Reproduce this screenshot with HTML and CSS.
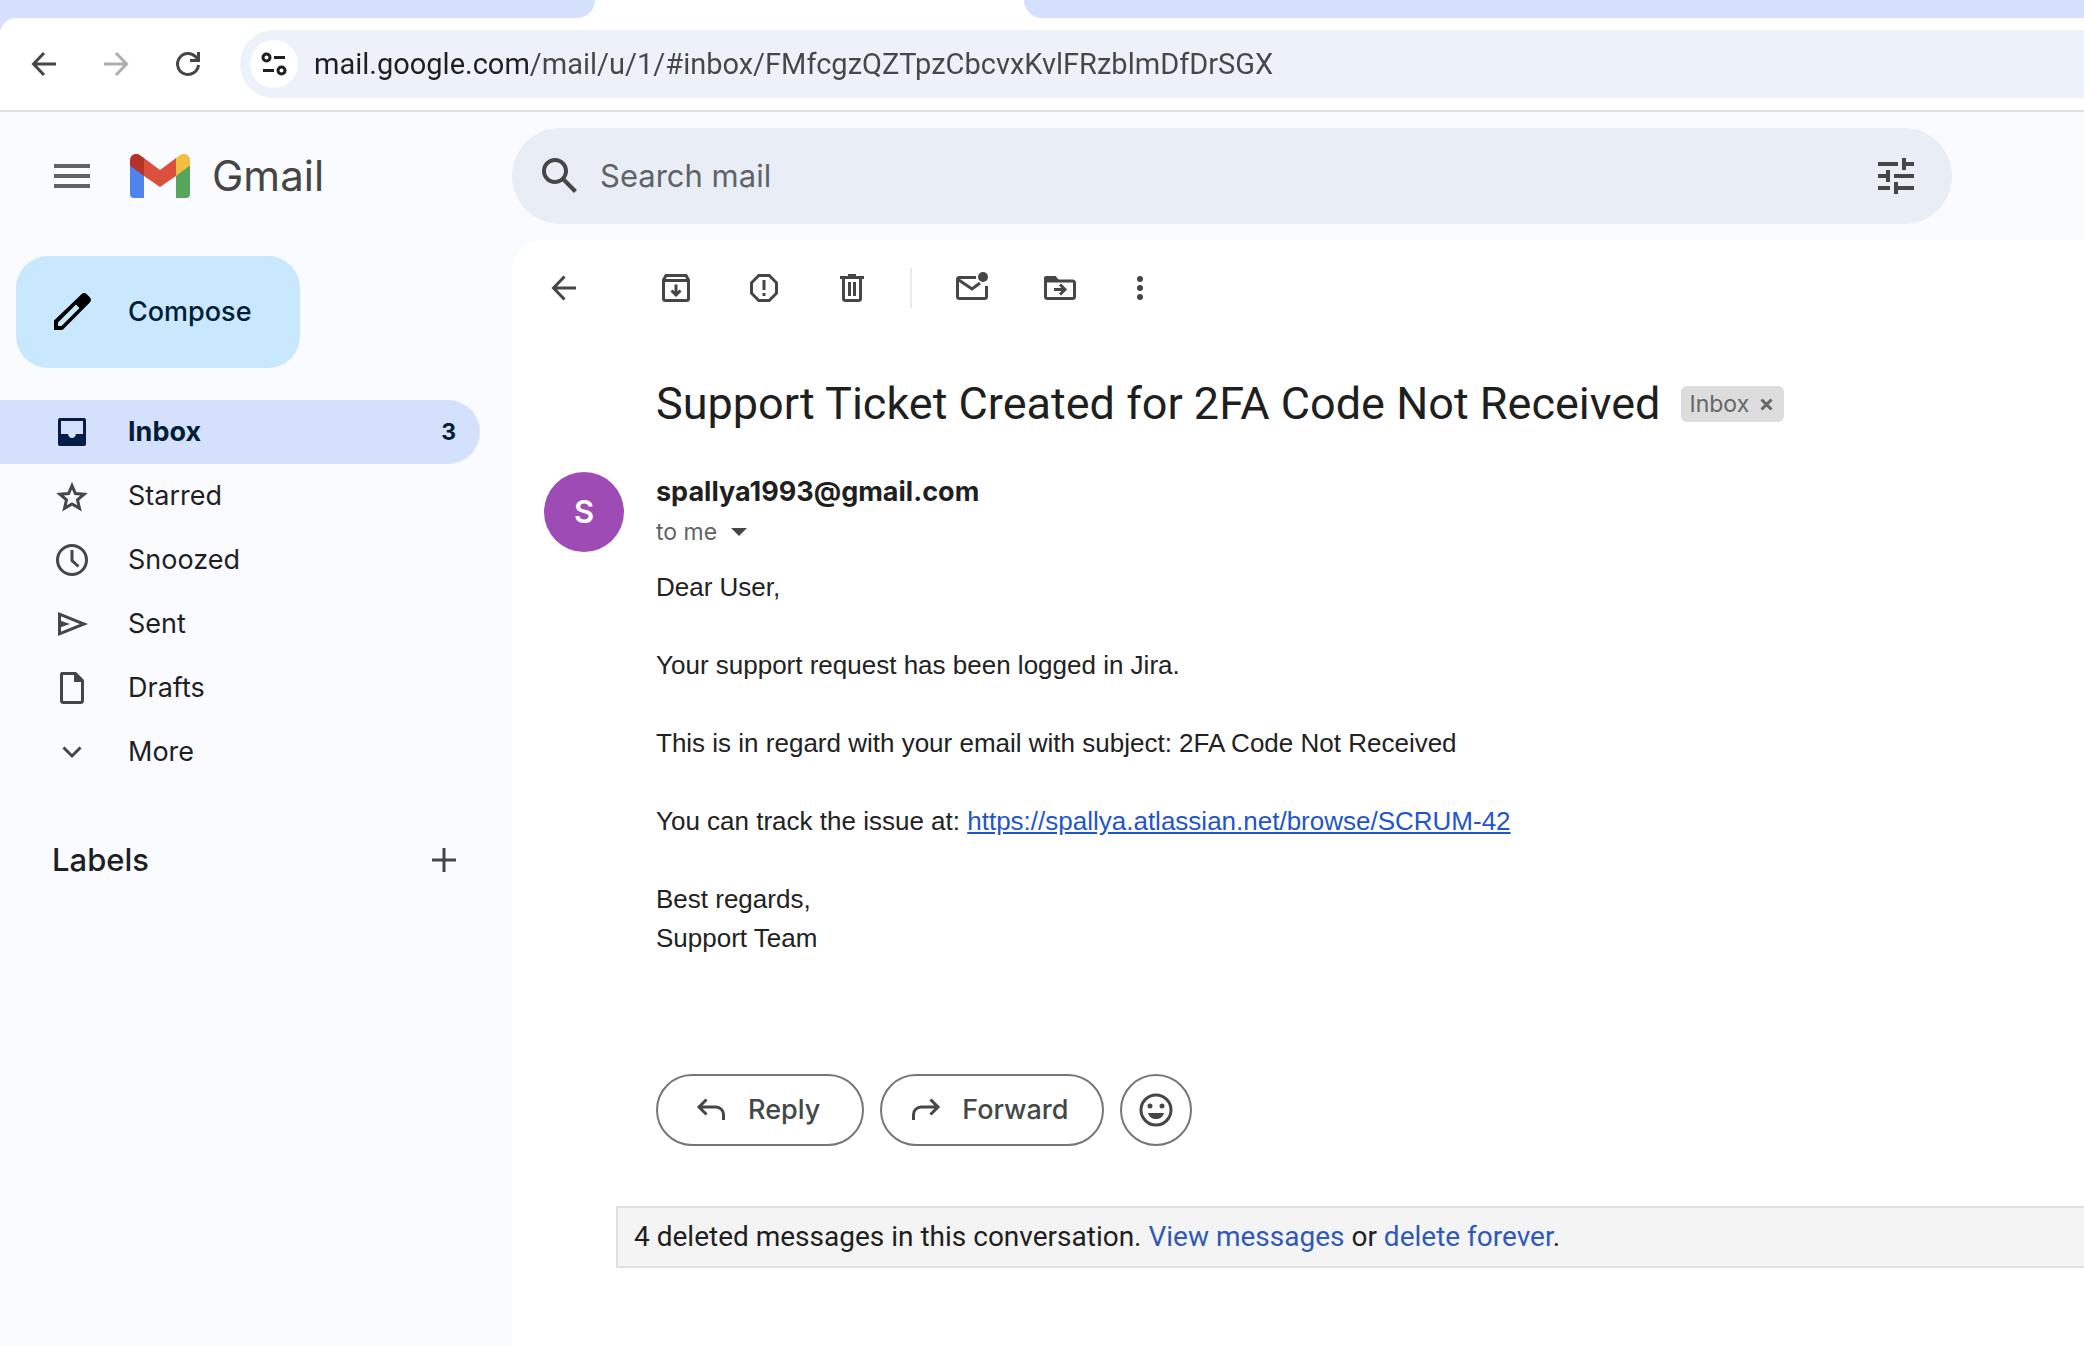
FILE: index.html
```html
<!DOCTYPE html>
<html lang="en">
<head>
<meta charset="utf-8">
<meta name="viewport" content="width=device-width, initial-scale=1">
<title>Support Ticket Created for 2FA Code Not Received - Gmail</title>
<link rel="stylesheet" href="styles.css">
</head>
<body>
<div class="browser">
  <div class="tabs">
    <div class="tab tab-before"></div>
    <div class="tab-active"></div>
    <div class="tab tab-after"></div>
  </div>
  <div class="toolbar">
    <button class="nav-btn" aria-label="Back">
      <svg viewBox="0 0 40 40" class="icon line"><path d="M32 20H10M20 9 9.500 20 20 31"/></svg>
    </button>
    <button class="nav-btn nav-off" aria-label="Forward" disabled>
      <svg viewBox="0 0 40 40" class="icon line"><path d="M8 20h22M20 9l10.500 11L20 31"/></svg>
    </button>
    <button class="nav-btn" aria-label="Reload">
      <svg viewBox="0 0 40 40" class="icon line"><path d="M30.500 21A10.500 10.500 0 1 1 27.500 12.600l3 3M30.500 8v8.500H22"/></svg>
    </button>
    <div class="omnibox">
      <button class="site-btn" aria-label="View site information">
        <svg viewBox="0 0 48 48" class="site-icon line"><circle cx="16.500" cy="17.500" r="3.500"/><path d="M24 17.500h11M13 30.500h11"/><circle cx="31.500" cy="30.500" r="3.500"/></svg>
      </button>
      <input class="url" type="text" aria-label="Address" spellcheck="false" value="mail.google.com/mail/u/1/#inbox/FMfcgzQZTpzCbcvxKvlFRzblmDfDrSGX">
    </div>
  </div>
</div>

<div class="app">
  <header class="header">
    <div class="brand">
      <button class="plain" aria-label="Main menu">
        <svg viewBox="0 0 48 48" class="icon-lg menu-icon"><path d="M6 12h36v4H6zM6 22h36v4H6zM6 32h36v4H6z"/></svg>
      </button>
      <a class="logo" href="#">
        <svg viewBox="0 0 60 44" class="logo-mark" aria-hidden="true">
          <path fill="#4f83ee" d="M4 44h10V20.500L0 10v30a4 4 0 0 0 4 4z"/>
          <path fill="#57a55a" d="M46 44h10a4 4 0 0 0 4-4V10L46 20.500z"/>
          <path fill="#f1be42" d="M46 4v18l14-10.500V6C60 .8 54-2 49.800 1.200z"/>
          <path fill="#d9503f" d="M14 22V4l16 12L46 4v18L30 33z"/>
          <path fill="#b43329" d="M0 6v5.500L14 22V4l-3.800-2.800C6-2 0 .8 0 6z"/>
        </svg>
        <span class="logo-text">Gmail</span>
      </a>
    </div>
    <form class="search">
      <button class="plain" type="button" aria-label="Search">
        <svg viewBox="0 0 24 24" class="icon-lg"><path d="M20.490 19l-5.730-5.730C15.530 12.200 16 10.910 16 9.500A6.500 6.500 0 1 0 9.500 16c1.410 0 2.700-.470 3.770-1.240L19 20.490 20.490 19zM5 9.500C5 7.010 7.010 5 9.500 5S14 7.010 14 9.500 11.990 14 9.500 14 5 11.990 5 9.500z"/></svg>
      </button>
      <input class="search-input" type="text" placeholder="Search mail" aria-label="Search mail">
      <button class="plain" type="button" aria-label="Show search options">
        <svg viewBox="0 0 24 24" class="icon-lg"><path d="M3 17v2h6v-2H3zM3 5v2h10V5H3zm10 16v-2h8v-2h-8v-2h-2v6h2zM7 9v2H3v2h4v2h2V9H7zm14 4v-2H11v2h10zm-6-4h2V7h4V5h-4V3h-2v6z"/></svg>
      </button>
    </form>
  </header>

  <aside class="sidebar">
    <button class="compose">
      <svg viewBox="0 0 48 48" class="icon-lg" aria-hidden="true"><path fill-rule="evenodd" d="M6 42v-9.500L33.500 6.200c1.600-1.600 3.700-1.500 5.300 0l3 3c1.600 1.600 1.600 3.700 0 5.300L14.500 42zM10 38h3.500l18-18-3.500-3.500-18 18z"/></svg>
      Compose
    </button>
    <nav class="folders" aria-label="Folders">
      <a class="folder folder-on" href="#inbox"><svg viewBox="0 0 40 40" class="icon"><path fill-rule="evenodd" d="M8 6h24a2 2 0 0 1 2 2v24a2 2 0 0 1-2 2H8a2 2 0 0 1-2-2V8a2 2 0 0 1 2-2zm1 3v13h7c.500 2.500 2 4 4 4s3.500-1.500 4-4h7V9z"/></svg><span>Inbox</span><span class="count">3</span></a>
      <a class="folder" href="#starred"><svg viewBox="0 0 40 40" class="icon line"><path d="M20 9.500l3.400 8 8.700.700-6.600 5.700 2 8.500-7.500-4.500-7.500 4.500 2-8.500-6.600-5.700 8.700-.700z"/></svg><span>Starred</span></a>
      <a class="folder" href="#snoozed"><svg viewBox="0 0 40 40" class="icon line"><circle cx="20" cy="20" r="14.500"/><path d="M20 10v10.500l6.500 6"/></svg><span>Snoozed</span></a>
      <a class="folder" href="#sent"><svg viewBox="0 0 40 40" class="icon line"><path d="M7.500 10.200v19.600L32 20z"/><path class="solid" d="M8 16.500l10 3.500-10 3.500z"/></svg><span>Sent</span></a>
      <a class="folder" href="#drafts"><svg viewBox="0 0 40 40" class="icon line"><path d="M10 5.500h13.500l7 7v20a2 2 0 0 1-2 2H11.500a2 2 0 0 1-2-2V7.500a2 2 0 0 1 .500-2z"/><path class="solid" d="M22 5v9h9z"/></svg><span>Drafts</span></a>
      <a class="folder" href="#more"><svg viewBox="0 0 40 40" class="icon line"><path d="M11.500 15.500l8.500 8.500 8.500-8.500"/></svg><span>More</span></a>
    </nav>
    <div class="labels">
      <h2 class="labels-title">Labels</h2>
      <button class="plain" aria-label="Create new label">
        <svg viewBox="0 0 40 40" class="icon line"><path d="M20 8v24M8 20h24"/></svg>
      </button>
    </div>
  </aside>

  <main class="main">
    <div class="actions">
      <button class="plain back" aria-label="Back to Inbox"><svg viewBox="0 0 40 40" class="icon line"><path d="M32 20H10M20.500 8.500L9.500 20l11 11.500"/></svg></button>
      <div class="action-group">
        <button class="plain" aria-label="Archive"><svg viewBox="0 0 40 40" class="icon line"><path d="M7.500 12l2.500-4.500h20l2.500 4.500v18.500a2 2 0 0 1-2 2h-21a2 2 0 0 1-2-2zM7.500 12.500h25M20 16.500v10M15.500 22.500l4.500 4.500 4.500-4.500"/></svg></button>
        <button class="plain" aria-label="Report spam"><svg viewBox="0 0 40 40" class="icon line"><path d="M14.800 7.500h10.400l7.300 7.300v10.400l-7.300 7.300H14.800l-7.300-7.300V14.800zM20 12v10"/><path class="solid" d="M18.500 25h3v3h-3z"/></svg></button>
        <button class="plain" aria-label="Delete"><svg viewBox="0 0 40 40" class="icon line"><path d="M8 9.500h24M16 7.500h8M11.500 10v20.500a2 2 0 0 0 2 2h13a2 2 0 0 0 2-2V10M17.500 14v14M22.500 14v14"/></svg></button>
      </div>
      <div class="action-group action-group-end">
        <button class="plain" aria-label="Mark as unread"><svg viewBox="0 0 40 40" class="icon line"><path d="M24 9.500H7.500a2 2 0 0 0-2 2v17a2 2 0 0 0 2 2h25a2 2 0 0 0 2-2V18M6 11.500l14 9.500 8-6"/><circle class="solid" cx="31" cy="9" r="5"/></svg></button>
        <button class="plain" aria-label="Move to"><svg viewBox="0 0 40 40" class="icon line"><path d="M5.500 10v18.500a2 2 0 0 0 2 2h25a2 2 0 0 0 2-2V15a2 2 0 0 0-2-2h-27M14 21.500h10M20 16.500l5 5-5 5"/><path class="solid" d="M4 10a2 2 0 0 1 2-2h9.500l4 4.500H4z"/></svg></button>
      </div>
      <button class="plain" aria-label="More"><svg viewBox="0 0 40 40" class="icon"><circle cx="20" cy="11" r="3"/><circle cx="20" cy="20" r="3"/><circle cx="20" cy="29" r="3"/></svg></button>
    </div>

    <div class="subject-row">
      <h1 class="subject">Support Ticket Created for 2FA Code Not Received</h1>
      <button class="chip">Inbox <svg viewBox="0 0 16 16" class="chip-x line" aria-hidden="true"><path d="M2.500 3.500l10 10M12.500 3.500l-10 10"/></svg></button>
    </div>

    <article class="message">
      <div class="avatar">S</div>
      <div class="content">
        <div class="sender">spallya1993@gmail.com</div>
        <button class="to-me">to me <svg viewBox="0 0 16 16" class="caret" aria-hidden="true"><path d="M0 4h16L8 12z"/></svg></button>
        <div class="mail-body">
          <p>Dear User,</p>
          <p>Your support request has been logged in Jira.</p>
          <p>This is in regard with your email with subject: 2FA Code Not Received</p>
          <p>You can track the issue at: <a href="https://spallya.atlassian.net/browse/SCRUM-42">https://spallya.atlassian.net/browse/SCRUM-42</a></p>
          <p>Best regards,<br>Support Team</p>
        </div>
        <div class="replies">
          <button class="pill"><svg viewBox="0 0 40 40" class="icon line"><path d="M14.500 9.500L7 17l7.500 7.500M7 17h17a7.500 7.500 0 0 1 7.500 7.500V30"/></svg>Reply</button>
          <button class="pill pill-forward"><svg viewBox="0 0 40 40" class="icon line"><path d="M24.500 9.500L32 17l-7.500 7.500M32 17H15a7.500 7.500 0 0 0-7.500 7.500V30"/></svg>Forward</button>
          <button class="pill pill-round" aria-label="Add reaction"><svg viewBox="0 0 40 40" class="icon"><circle class="ring" cx="20" cy="20" r="15"/><circle cx="14" cy="16" r="2.500"/><circle cx="26" cy="16" r="2.500"/><path d="M12 23h16c-1.200 4-4.200 6-8 6s-6.800-2-8-6z"/></svg></button>
        </div>
      </div>
    </article>

    <div class="notice">4 deleted messages in this conversation. <a href="#view">View messages</a> or <a href="#delete">delete forever</a>.</div>
  </main>
</div>
</body>
</html>
```
FILE: styles.css
```css
* {
  box-sizing: border-box;
}

body {
  margin: 0;
  min-height: 100vh;
  display: flex;
  flex-direction: column;
  background: #f9fbff;
  color: #1f1f1f;
  font-family: Inter, Roboto, "Liberation Sans", sans-serif;
  font-size: 27px;
  line-height: 32px;
}

button,
input {
  font: inherit;
  color: inherit;
  border: 0;
  padding: 0;
  margin: 0;
  background: none;
}

svg {
  display: block;
  flex: none;
  fill: currentColor;
}

a {
  color: inherit;
  text-decoration: none;
}

.line {
  fill: none;
  stroke: currentColor;
  stroke-width: 3;
}

.solid {
  fill: currentColor;
  stroke: none;
}

.icon {
  width: 40px;
  height: 40px;
}

.icon-lg {
  width: 48px;
  height: 48px;
}

.plain {
  flex: none;
  color: #444746;
}

/* Browser chrome */

.browser {
  background: #d5e1fc;
}

.tabs {
  display: flex;
  height: 18px;
  background: #fff;
}

.tab {
  background: #d5e1fc;
}

.tab-before {
  width: 595px;
  border-bottom-right-radius: 18px;
}

.tab-active {
  width: 429px;
}

.tab-after {
  flex: 1;
  border-bottom-left-radius: 18px;
}

.toolbar {
  display: flex;
  align-items: center;
  gap: 32px;
  padding: 12px 0 12px 24px;
  background: #fff;
  border-bottom: 2px solid #e0e0e0;
  border-top-left-radius: 16px;
}

.nav-btn {
  color: #444746;
}

.nav-off {
  color: #adafae;
}

.omnibox {
  flex: 1;
  display: flex;
  align-items: center;
  gap: 16px;
  height: 68px;
  padding: 0 0 0 10px;
  background: #edf2fa;
  border-radius: 34px 0 0 34px;
}

.site-btn {
  background: #fff;
  border-radius: 50%;
  color: #1f1f1f;
}

.site-icon {
  width: 48px;
  height: 48px;
}

/* The host name is darker than the rest of the address */
.url {
  flex: 1;
  min-width: 0;
  color: transparent;
  background: linear-gradient(90deg, #1f1f1f 215px, #474747 215px);
  background-clip: text;
  -webkit-background-clip: text;
  font-family: Roboto, Inter, sans-serif;
  font-size: 29px;
}

/* App frame */

.app {
  flex: 1;
  display: grid;
  grid-template-columns: 512px minmax(0, 1fr);
  grid-template-rows: auto 1fr;
}

.header {
  grid-column: 1 / -1;
  display: grid;
  grid-template-columns: 512px minmax(0, 1fr);
  align-items: center;
  padding: 16px 132px 16px 0;
}

.brand {
  display: flex;
  align-items: center;
  gap: 34px;
  padding-left: 48px;
}

.menu-icon {
  fill: #5f6368;
}

.logo {
  display: flex;
  align-items: center;
  gap: 22px;
}

.logo-mark {
  width: 60px;
  height: 44px;
}

.logo-text {
  font-size: 42px;
  line-height: 48px;
  color: #444746;
}

.search {
  display: flex;
  align-items: center;
  gap: 16px;
  height: 96px;
  padding: 0 32px 0 24px;
  background: #e9eef6;
  border-radius: 48px;
}

.search-input {
  flex: 1;
  min-width: 0;
  font-size: 31px;
}

.search-input::placeholder {
  color: #5f6368;
  opacity: 1;
}

/* Sidebar */

.compose {
  display: flex;
  align-items: center;
  gap: 32px;
  height: 112px;
  margin: 16px 0 32px 16px;
  padding: 0 48px 0 32px;
  background: #c9e7fd;
  border-radius: 32px;
  color: #001d35;
  font-weight: 500;
}

.compose svg {
  fill: #000;
}

.folders {
  display: flex;
  flex-direction: column;
  margin-right: 32px;
}

.folder {
  display: flex;
  align-items: center;
  gap: 36px;
  height: 64px;
  padding: 0 24px 0 52px;
}

.folder svg {
  color: #444746;
}

.folder-on {
  background: #d5e1fc;
  border-radius: 0 32px 32px 0;
  color: #001d35;
  font-weight: 700;
}

.folder-on svg {
  color: #041e49;
}

.count {
  margin-left: auto;
  font-size: 23px;
}

.labels {
  display: flex;
  align-items: center;
  justify-content: space-between;
  margin-top: 56px;
  padding: 0 48px 0 52px;
}

.labels-title {
  margin: 0;
  font-size: 31px;
  line-height: 40px;
  font-weight: 500;
}

/* Conversation */

.main {
  background: #fff;
  border-top-left-radius: 32px;
}

.actions {
  display: flex;
  align-items: center;
  height: 96px;
  padding-left: 32px;
}

.back {
  margin-right: 72px;
}

.action-group {
  display: flex;
  align-items: center;
  gap: 48px;
  height: 40px;
  padding-right: 38px;
  border-right: 2px solid #e8eaed;
}

.action-group-end {
  padding: 0 40px;
  border: 0;
}

.subject-row {
  display: flex;
  align-items: center;
  gap: 20px;
  margin-top: 40px;
  padding-left: 144px;
}

.subject {
  margin: 0;
  font-family: Roboto, Inter, sans-serif;
  font-size: 45px;
  line-height: 56px;
  font-weight: 400;
}

.chip {
  display: flex;
  align-items: center;
  gap: 10px;
  height: 36px;
  padding: 0 9px;
  background: #ddd;
  border-radius: 6px;
  color: #666;
  font-size: 23px;
}

.chip-x {
  width: 16px;
  height: 16px;
}

.message {
  display: flex;
  gap: 32px;
  margin-top: 40px;
  padding-left: 32px;
}

.avatar {
  flex: none;
  width: 80px;
  height: 80px;
  border-radius: 50%;
  background: #9e4bb5;
  color: #fff;
  font-size: 31px;
  font-weight: 600;
  line-height: 80px;
  text-align: center;
}

.sender {
  line-height: 40px;
  font-weight: 700;
}

.to-me {
  display: flex;
  align-items: center;
  gap: 14px;
  margin-top: 4px;
  color: #5f6368;
  font-size: 23px;
}

.caret {
  width: 16px;
  height: 16px;
  fill: #444746;
}

.mail-body {
  margin-top: 20px;
  color: #222;
  font-family: "Liberation Sans", Arial, sans-serif;
  font-size: 26px;
  line-height: 39px;
}

.mail-body p {
  margin: 0 0 39px;
}

.mail-body a {
  color: #1f55cc;
  text-decoration: underline;
}

.replies {
  display: flex;
  gap: 16px;
  margin-top: 116px;
}

.pill {
  display: flex;
  align-items: center;
  gap: 16px;
  height: 72px;
  padding: 0 42px 0 34px;
  border: 2px solid #747775;
  border-radius: 36px;
  color: #444746;
  font-weight: 500;
}

.pill-forward {
  padding: 0 34px 0 24px;
}

.pill-round {
  padding: 0 14px;
}

.ring {
  fill: none;
  stroke: currentColor;
  stroke-width: 3;
}

.notice {
  margin: 60px 0 0 104px;
  padding: 13px 16px;
  background: #f4f4f4;
  border: 2px solid #e0e0e0;
  border-right: 0;
  font-family: Roboto, Inter, sans-serif;
  font-size: 28px;
}

.notice a {
  color: #3059b8;
}
```
